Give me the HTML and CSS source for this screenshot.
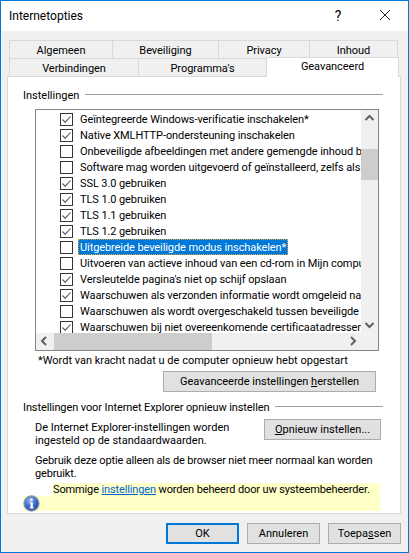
FILE: index.html
```html
<!DOCTYPE html>
<html>
<head>
  <meta charset="utf-8">
  <title>Internetopties</title>
  <link rel="stylesheet" href="styles.css">
</head>
<body>
  <div class="window">
    <div class="titlebar">
      <span class="title">Internetopties</span>
      <span class="help">?</span>
      <svg class="close" width="12" height="12" viewBox="0 0 12 12"><path d="M1 1L11 11M11 1L1 11" stroke="#222" stroke-width="1" fill="none"/></svg>
    </div>
    <div class="content">
      <div class="tabs">
        <div class="tab-row top">
          <div class="tab w-algemeen">Algemeen</div>
          <div class="tab w-beveiliging">Beveiliging</div>
          <div class="tab w-privacy">Privacy</div>
          <div class="tab w-inhoud">Inhoud</div>
        </div>
        <div class="tab-row bottom">
          <div class="tab w-verbindingen">Verbindingen</div>
          <div class="tab w-programmas">Programma's</div>
          <div class="tab active">Geavanceerd</div>
        </div>
      </div>
      <div class="panel">
        <div class="group-title first"><span>Instellingen</span><i></i></div>
        <div class="listbox">
          <div class="items">
            <div class="item"><span class="cb on"></span><span class="lbl">Geïntegreerde Windows-verificatie inschakelen*</span></div>
            <div class="item"><span class="cb on"></span><span class="lbl">Native XMLHTTP-ondersteuning inschakelen</span></div>
            <div class="item"><span class="cb"></span><span class="lbl">Onbeveiligde afbeeldingen met andere gemengde inhoud blokkeren</span></div>
            <div class="item"><span class="cb"></span><span class="lbl">Software mag worden uitgevoerd of geïnstalleerd, zelfs als de handtekening</span></div>
            <div class="item"><span class="cb on"></span><span class="lbl">SSL 3.0 gebruiken</span></div>
            <div class="item"><span class="cb on"></span><span class="lbl">TLS 1.0 gebruiken</span></div>
            <div class="item"><span class="cb on"></span><span class="lbl">TLS 1.1 gebruiken</span></div>
            <div class="item"><span class="cb on"></span><span class="lbl">TLS 1.2 gebruiken</span></div>
            <div class="item"><span class="cb"></span><span class="lbl selected">Uitgebreide beveiligde modus inschakelen*</span></div>
            <div class="item"><span class="cb"></span><span class="lbl">Uitvoeren van actieve inhoud van een cd-rom in Mijn computer toestaan</span></div>
            <div class="item"><span class="cb on"></span><span class="lbl">Versleutelde pagina's niet op schijf opslaan</span></div>
            <div class="item"><span class="cb on"></span><span class="lbl">Waarschuwen als verzonden informatie wordt omgeleid naar een andere</span></div>
            <div class="item"><span class="cb"></span><span class="lbl">Waarschuwen als wordt overgeschakeld tussen beveiligde en onbeveiligde</span></div>
            <div class="item"><span class="cb on"></span><span class="lbl">Waarschuwen bij niet overeenkomende certificaatadressen*</span></div>
          </div>
          <div class="vscroll">
            <svg width="17" height="17" viewBox="0 0 17 17"><path d="M4.500 10L8.500 6L12.500 10" stroke="#606060" stroke-width="2" fill="none"/></svg>
            <div class="vtrack"><div class="vthumb"></div></div>
            <svg width="17" height="17" viewBox="0 0 17 17"><path d="M4.500 7L8.500 11L12.500 7" stroke="#606060" stroke-width="2" fill="none"/></svg>
          </div>
          <div class="hscroll">
            <svg width="17" height="16" viewBox="0 0 17 16"><path d="M10 4L6 8L10 12" stroke="#606060" stroke-width="2" fill="none"/></svg>
            <div class="htrack"><div class="hthumb"></div></div>
            <svg width="17" height="16" viewBox="0 0 17 16"><path d="M7 4L11 8L7 12" stroke="#606060" stroke-width="2" fill="none"/></svg>
          </div>
          <div class="corner"></div>
        </div>
        <p class="note">*Wordt van kracht nadat u de computer opnieuw hebt opgestart</p>
        <div class="restore-row">
          <button class="btn restore">Geavanceerde instellingen <u>h</u>erstellen</button>
        </div>
        <div class="group-title second"><span>Instellingen voor Internet Explorer opnieuw instellen</span><i></i></div>
        <div class="reset-row">
          <p class="reset-text">De Internet Explorer-instellingen worden ingesteld op de standaardwaarden.</p>
          <button class="btn reset"><u>O</u>pnieuw instellen...</button>
        </div>
        <p class="warn">Gebruik deze optie alleen als de browser niet meer normaal kan worden gebruikt.</p>
        <div class="managed">
          <div class="managed-icon">
            <svg width="17" height="17" viewBox="0 0 17 17">
              <defs>
                <radialGradient id="infoFill" cx="0.4" cy="0.3" r="0.8">
                  <stop offset="0" stop-color="#8fb4ec"/>
                  <stop offset="0.6" stop-color="#2f5fc4"/>
                  <stop offset="1" stop-color="#1c3f9c"/>
                </radialGradient>
              </defs>
              <circle cx="8.500" cy="8.500" r="7.500" fill="url(#infoFill)" stroke="#8a95a8" stroke-width="1.300"/>
              <circle cx="8.500" cy="4.800" r="1.300" fill="#fff"/>
              <path d="M6.800 7.200H9.800V12.300H10.800V13.400H6.600V12.300H7.600V8.300H6.800Z" fill="#fff"/>
            </svg>
          </div>
          <div class="managed-text">Sommige <a href="#">instellingen</a> worden beheerd door uw systeembeheerder.</div>
        </div>
      </div>
      <div class="actions">
        <button class="btn action default">OK</button>
        <button class="btn action">Annuleren</button>
        <button class="btn action">Toepa<u>s</u>sen</button>
      </div>
    </div>
  </div>
</body>
</html>
```

FILE: styles.css
```css
* {
  box-sizing: border-box;
}

html, body {
  margin: 0;
  padding: 0;
}

body {
  width: 409px;
  height: 553px;
  overflow: hidden;
  font-family: Roboto, "Noto Sans", sans-serif;
  font-size: 11px;
  color: #000;
}

.window {
  width: 409px;
  height: 553px;
  border: 1px solid #0078d7;
  display: flex;
  flex-direction: column;
  background: #f0f0f0;
}

.titlebar {
  height: 30px;
  background: #fff;
  display: flex;
  align-items: center;
  padding-left: 8px;
  font-size: 12px;
}

.title {
  flex: 1;
}

.help {
  font-size: 14px;
  width: 14px;
  margin-right: 34px;
  text-align: center;
}

.close {
  margin-right: 17px;
  margin-bottom: 2px;
}

.content {
  flex: 1;
  padding: 9px 7px 0 6px;
}

.tabs {
  display: flex;
  flex-direction: column;
  height: 36px;
}

.tab-row {
  display: flex;
  height: 18px;
  padding-left: 2px;
}

.tab {
  background: #f0f0f0;
  border: 1px solid #d9d9d9;
  border-bottom: 0;
  margin-left: -1px;
  text-align: center;
  line-height: 19px;
  letter-spacing: -0.05px;
}

.w-algemeen { width: 104px; margin-left: 0; }
.w-beveiliging { width: 107px; }
.w-privacy { width: 92px; }
.w-inhoud { width: 89px; }
.w-verbindingen { width: 130px; margin-left: 0; }
.w-programmas { width: 129px; }

.tab.active {
  width: 133px;
  height: 20px;
  margin-top: -1px;
  background: #fff;
  position: relative;
  z-index: 1;
  line-height: 17px;
}

.panel {
  height: 438px;
  background: #fff;
  border: 1px solid #d9d9d9;
  padding: 0 17px 0 15px;
}

.group-title {
  display: flex;
  align-items: center;
  gap: 6px;
}

.group-title i {
  flex: 1;
  height: 1px;
  margin-bottom: 2px;
  background: #a0a0a0;
}

.group-title.first {
  height: 16px;
  margin-top: 10px;
}

.group-title.second {
  height: 16px;
  margin-top: 7px;
  letter-spacing: -0.1px;
}

.listbox {
  margin: 6px 4px 0 12px;
  height: 242px;
  border: 1px solid #828790;
  display: grid;
  grid-template-columns: 1fr 17px;
  grid-template-rows: 1fr 17px;
  overflow: hidden;
}

.items {
  overflow: hidden;
  padding: 1px 0 0 24px;
}

.item {
  height: 16px;
  display: flex;
  align-items: center;
  white-space: nowrap;
}

.cb {
  width: 13px;
  height: 13px;
  flex: none;
  border: 1px solid #333;
  background: #fff;
  margin-right: 5px;
}

.cb.on {
  background: #fff url("data:image/svg+xml,%3Csvg xmlns='http://www.w3.org/2000/svg' width='11' height='11'%3E%3Cpath d='M1.500 5.500L4.200 8.200L9.500 2.500' stroke='%23555' fill='none' stroke-width='1.100'/%3E%3C/svg%3E") no-repeat center;
}

.lbl {
  padding: 0 1px;
  height: 16px;
  line-height: 16px;
  letter-spacing: -0.09px;
  border: 1px solid transparent;
}

.lbl.selected {
  background: #0078d7;
  color: #fff;
  border: 1px dotted #e8a33a;
}

.vscroll {
  background: #f0f0f0;
  display: flex;
  flex-direction: column;
}

.vtrack {
  flex: 1;
  padding-top: 22px;
}

.vthumb {
  height: 31px;
  background: #cdcdcd;
}

.hscroll {
  background: #f0f0f0;
  display: flex;
}

.htrack {
  flex: 1;
  padding-left: 1px;
}

.hthumb {
  width: 158px;
  height: 100%;
  background: #cdcdcd;
}

.corner {
  background: #f0f0f0;
}

.note {
  margin: 2px 0 0 15px;
  line-height: 16px;
}

.restore-row {
  display: flex;
  justify-content: flex-end;
  padding-right: 7px;
  margin-top: 2px;
}

.btn {
  font: inherit;
  color: #000;
  background: #e1e1e1;
  border: 1px solid #adadad;
  padding: 0;
  height: 21px;
}

.restore {
  width: 213px;
}

.reset-row {
  display: flex;
  justify-content: space-between;
  margin: 4px 0 0 12px;
  padding-right: 2px;
}

.reset-text {
  width: 200px;
  margin: 2px 0 0;
  line-height: 13px;
}

.reset {
  width: 117px;
  height: 21px;
}

.warn {
  margin: 7px 0 0 12px;
  width: 350px;
  line-height: 13px;
  letter-spacing: -0.15px;
}

.managed {
  display: flex;
  align-items: flex-end;
  margin-top: 3px;
  height: 28px;
  width: 357px;
}

.managed-icon {
  width: 30px;
  height: 15px;
  background: #ffffc8;
  flex: none;
}

.managed-icon svg {
  display: block;
  margin-top: -1px;
}

.managed-text {
  flex: 1;
  height: 28px;
  background: #ffffc8;
  line-height: 14px;
  letter-spacing: -0.13px;
}

.managed-text a {
  color: #0066cc;
}

.actions {
  display: flex;
  justify-content: flex-end;
  gap: 8px;
  margin-top: 9px;
}

.action {
  width: 73px;
}

.default {
  border: 2px solid #0078d7;
}
```
